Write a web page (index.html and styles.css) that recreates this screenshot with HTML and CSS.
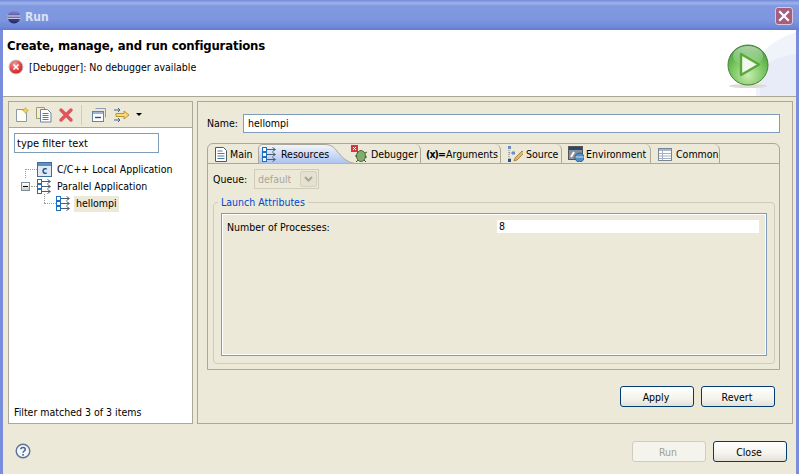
FILE: index.html
```html
<!DOCTYPE html>
<html lang="en">
<head>
<meta charset="utf-8">
<title>Run</title>
<link rel="stylesheet" href="styles.css">
</head>
<body>
<div class="window">
  <header class="titlebar">
    <svg class="ti" width="14" height="14" viewBox="0 0 14 14"><defs><linearGradient id="ec" x1="0" y1="0" x2="0" y2="1"><stop offset="0" stop-color="#8b8fd0"/><stop offset=".5" stop-color="#4a4a9a"/><stop offset="1" stop-color="#232266"/></linearGradient></defs><circle cx="7" cy="7" r="6.5" fill="url(#ec)"/><path d="M0.3 6h13.4M0.3 8.200h13.400" stroke="#eef0fa" stroke-width="1.100"/></svg>
    <span class="ttext">Run</span>
    <span class="xbtn"><svg width="18" height="18" viewBox="0 0 18 18"><path d="M5 5l8 8M13 5l-8 8" stroke="#fff" stroke-width="2.2" stroke-linecap="square"/></svg></span>
  </header>

  <section class="banner">
    <svg class="swoosh" width="40" height="66" viewBox="0 0 40 66"><path d="M0 30C12 14 24 8 40 2V66H0Z" fill="#f1f3fb"/><path d="M4 66V40C14 30 26 26 40 24V66Z" fill="#e8ecf8"/></svg>
    <div class="btext">
      <h1 class="btitle">Create, manage, and run configurations</h1>
      <div class="bmsg">
        <svg width="16" height="16" viewBox="0 0 16 16"><defs><radialGradient id="er" cx=".4" cy=".3" r=".8"><stop offset="0" stop-color="#f59a9a"/><stop offset=".6" stop-color="#e23b3b"/><stop offset="1" stop-color="#b81f1f"/></radialGradient></defs><circle cx="8" cy="8" r="7" fill="url(#er)" stroke="#c9c9c9"/><path d="M5.500 5.500l5 5M10.500 5.500l-5 5" stroke="#fff" stroke-width="1.600"/></svg>
        <span>[Debugger]: No debugger available</span>
      </div>
    </div>
    <svg class="runlogo" width="44" height="46" viewBox="0 0 44 46"><defs><radialGradient id="rg" cx=".5" cy=".75" r=".75"><stop offset="0" stop-color="#c8edb0"/><stop offset=".55" stop-color="#79c660"/><stop offset="1" stop-color="#3f9a3a"/></radialGradient><linearGradient id="rs" x1="0" y1="0" x2="0" y2="1"><stop offset="0" stop-color="#fff" stop-opacity=".55"/><stop offset="1" stop-color="#fff" stop-opacity="0"/></linearGradient></defs><ellipse cx="22" cy="42" rx="19" ry="2" fill="#dcdcd4"/><circle cx="22" cy="21" r="20" fill="url(#rg)" stroke="#4c7f3c" stroke-width="1"/><ellipse cx="22" cy="12" rx="15" ry="10" fill="url(#rs)"/><path d="M15 10L33 20.500 15 31Z" fill="#fff" fill-opacity=".85" stroke="#5aa83a" stroke-width="2.400" stroke-linejoin="round"/></svg>
  </section>

  <main class="content">
    <aside class="lpanel">
      <div class="ltool">
        <svg class="tic" width="16" height="16" viewBox="0 0 16 16"><path d="M2.500 2.500h7l3 3v9h-10z" fill="#fdfdf6" stroke="#8d99a8"/><path d="M11.500 0.500l1 2 2 1-2 1-1 2-1-2-2-1 2-1z" fill="#f4d35a" stroke="#c59a28" stroke-width=".6"/></svg>
        <svg class="tic" width="16" height="16" viewBox="0 0 16 16"><path d="M.5 .5h8v11h-8z" fill="#f5ecc9" stroke="#a59a6e"/><path d="M4.500 2.500h7l3.500 3.500v9H4.500z" fill="#fff" stroke="#6c83a8"/><path d="M6.500 6.500h6M6.500 8.500h6M6.500 10.500h6M6.500 12.500h6" stroke="#5a7bb0"/></svg>
        <svg class="tic" width="16" height="16" viewBox="0 0 16 16"><path d="M3 3l10 10M13 3L3 13" stroke="#e0555a" stroke-width="3.400" stroke-linecap="round"/></svg>
        <span class="tsep"></span>
        <svg class="tic" width="16" height="16" viewBox="0 0 16 16"><path d="M4.500 1.500h10v9" fill="none" stroke="#8d9fb8"/><rect x="1.500" y="4.500" width="11" height="10" fill="#fff" stroke="#6a80a0"/><rect x="2" y="5" width="10" height="2" fill="#9db4d4"/><path d="M4 10.500h6" stroke="#2f4f86" stroke-width="1.400"/></svg>
        <svg class="tic tic-wide" width="18" height="16" viewBox="0 0 18 16"><path d="M1 3h6M1 13h6" stroke="#45618c" stroke-width="1.200"/><path d="M5 1l2 2-2 2M5 11l2 2-2 2" fill="none" stroke="#45618c"/><path d="M3 6.500h8V4l5 4-5 4V9.500H3z" fill="#f6d97a" stroke="#b58a22" stroke-width=".9"/></svg>
        <span class="caret"></span>
      </div>
      <div class="ltree">
        <div class="filter">type filter text</div>
        <ul class="tree">
          <li class="row row-a">
            <span class="dotv dotv-a"></span><span class="doth doth-a"></span>
            <svg width="15" height="15" viewBox="0 0 15 15"><rect x=".5" y=".5" width="14" height="14" fill="#dfeaf6" stroke="#3e6d9e"/><rect x="1" y="1" width="13" height="3" fill="#5f8fbe"/><text x="4.500" y="12" class="cglyph">c</text></svg>
            <span class="lbl">C/C++ Local Application</span>
          </li>
          <li class="row row-b">
            <span class="minus"></span><span class="doth doth-b"></span>
            <svg width="15" height="15" viewBox="0 0 15 15"><use href="#par"/></svg>
            <span class="lbl">Parallel Application</span>
          </li>
          <li class="row row-c">
            <span class="dotv dotv-c"></span><span class="doth doth-c"></span>
            <svg width="15" height="15" viewBox="0 0 15 15"><use href="#par"/></svg>
            <span class="lbl sel">hellompi</span>
          </li>
        </ul>
        <div class="matched">Filter matched 3 of 3 items</div>
      </div>
    </aside>

    <section class="rpanel">
      <div class="namerow"><label class="nlabel">Name:</label><div class="ninput">hellompi</div></div>
      <div class="folder">
        <div class="tabs">
          <div class="tab tab-main">
            <svg width="14" height="15" viewBox="0 0 14 15"><path d="M1.500 .5h8l3 3v11h-11z" fill="#fff" stroke="#4d5a66"/><path d="M3.500 4h5M3.500 6.500h7M3.500 9h7M3.500 11.500h7" stroke="#4d7a9a"/></svg>
            <span>Main</span>
          </div>
          <div class="tab tab-res">
            <svg class="curve" width="100" height="20" viewBox="0 0 100 20"><defs><linearGradient id="ag" x1="0" y1="0" x2="0" y2="1"><stop offset="0" stop-color="#f4f6fc"/><stop offset="1" stop-color="#a9c1ee"/></linearGradient></defs><path d="M.5 20V5Q.5 .5 5 .5H68C80 .5 80 17 97 19.500V20Z" fill="url(#ag)" stroke="#aca899"/></svg>
            <svg class="tcon" width="15" height="15" viewBox="0 0 15 15"><use href="#par"/></svg>
            <span class="tcon">Resources</span>
          </div>
          <div class="tab tab-dbg">
            <svg width="17" height="18" viewBox="0 0 17 18"><ellipse cx="10" cy="11" rx="4.500" ry="5.500" fill="#82ab6e" stroke="#4d6b3a"/><path d="M5 6l2 2M16 7l-2 1M4 11h2M16 12h-2M5 17l2-2M15 17l-2-2" stroke="#3d4d2c"/><rect x="0" y="0" width="7" height="7" fill="#d9353a"/><path d="M2 2l3 3M5 2l-3 3" stroke="#fff"/></svg>
            <span>Debugger</span>
          </div>
          <div class="tab tab-arg"><span class="xeq">(x)=</span><span>Arguments</span></div>
          <div class="tab tab-src">
            <svg width="16" height="16" viewBox="0 0 16 16"><path d="M2 2v11h3M2 7h3" fill="none" stroke="#6b7f96" stroke-dasharray="1 1"/><rect x="1" y="0" width="3" height="3" fill="#6b8cc0"/><rect x="5" y="5.500" width="3" height="3" fill="#6b8cc0"/><rect x="1" y="13" width="3" height="3" fill="#35507c"/><path d="M7 15l1-3 7-7 2 2-7 7z" fill="#e8b860" stroke="#8a6a2a" stroke-width=".7"/></svg>
            <span>Source</span>
          </div>
          <div class="tab tab-env">
            <svg width="16" height="16" viewBox="0 0 16 16"><rect x=".5" y=".5" width="14" height="13" fill="#8a8f98" stroke="#555"/><rect x="1" y="1" width="13" height="3" fill="#24487a"/><path d="M3 11l3-5" stroke="#fff" stroke-width="2"/><circle cx="11.500" cy="11.500" r="4.500" fill="#4f8fc6" stroke="#2d5f92"/><path d="M7.500 11h8" stroke="#cfe2f2"/></svg>
            <span>Environment</span>
          </div>
          <div class="tab tab-com">
            <svg width="14" height="13" viewBox="0 0 14 13"><rect x=".5" y=".5" width="13" height="12" fill="#fff" stroke="#7a8594"/><rect x="1" y="1" width="12" height="2" fill="#a7b5cf"/><path d="M1 5.500h12M1 8h12M1 10.500h12M4.500 3v9" stroke="#a5b0c2"/></svg>
            <span>Common</span>
          </div>
        </div>
        <div class="tabbody">
          <div class="queue">
            <label class="qlabel">Queue:</label>
            <div class="combo"><span class="ctext">default</span><span class="carrow"><svg width="9" height="6" viewBox="0 0 9 6"><path d="M1 1l3.500 3.500L8 1" fill="none" stroke="#a9a698" stroke-width="2"/></svg></span></div>
          </div>
          <fieldset class="group">
            <legend>Launch Attributes</legend>
            <div class="attrs">
              <span class="alabel">Number of Processes:</span>
              <span class="avalue">8</span>
            </div>
          </fieldset>
        </div>
      </div>
      <div class="actions">
        <button class="btn" type="button">Apply</button>
        <button class="btn" type="button">Revert</button>
      </div>
    </section>
  </main>

  <footer class="foot">
    <svg class="help" width="16" height="16" viewBox="0 0 16 16"><circle cx="8" cy="8" r="6.800" fill="#f4f6fa" stroke="#5a7299" stroke-width="1.400"/><path d="M5.800 6.300C5.800 3.800 10.300 3.800 10.300 6.300C10.300 8 8 8 8 9.800" fill="none" stroke="#4a638e" stroke-width="1.500"/><rect x="7.200" y="11" width="1.600" height="1.700" fill="#4a638e"/></svg>
    <div class="factions">
      <button class="btn btn-off" type="button">Run</button>
      <button class="btn" type="button">Close</button>
    </div>
  </footer>
</div>
<svg class="defs" width="0" height="0"><defs><g id="par"><path d="M4 2.500h9M4 7.500h9M4 12.500h9M10.500 .5l3 2-3 2M10.500 5.500l3 2-3 2M10.500 10.500l3 2-3 2" fill="none" stroke="#4e5e70"/><rect x=".5" y=".5" width="4" height="4" fill="#fff" stroke="#1f6fbf"/><rect x=".5" y="5.500" width="4" height="4" fill="#fff" stroke="#1f6fbf"/><rect x=".5" y="10.500" width="4" height="4" fill="#fff" stroke="#1f6fbf"/></g></defs></svg>
</body>
</html>
```
FILE: styles.css
```css
* { box-sizing: border-box; }
html, body { margin: 0; padding: 0; width: 799px; height: 474px; overflow: hidden; }
body { font: 10.5px/13px "DejaVu Sans Condensed", "Liberation Sans", sans-serif; color: #000; background: #ece9d8; }
.defs { position: absolute; }
.window { width: 799px; height: 474px; display: flex; flex-direction: column; border-left: 3px solid #7a8cdc; border-right: 3px solid #7a8cdc; }

.titlebar { height: 30px; margin: 0 -3px; padding: 10px 6px 0 7px; display: flex; align-items: flex-start; gap: 4px;
  background: linear-gradient(#6f8ad8 0, #9fb2ea 3px, #8099e0 6px, #7d96df 20px, #6f88d8 27px, #5f7bd0 30px); }
.ttext { font: bold 12px/14px "DejaVu Sans Condensed", sans-serif; color: #d9e2f7; }
.xbtn { margin: -3px 0 0 auto; width: 18px; height: 18px; background: #a65e7e; border: 1px solid #d9c8dc; border-radius: 3px; display: flex; align-items: center; justify-content: center; }
.xbtn svg { margin: -1px; flex: none; }

.banner { height: 67px; background: #fff; border-bottom: 1px solid #a9a692; position: relative; display: flex; justify-content: space-between; padding: 0 26px 0 4px; }
.swoosh { position: absolute; right: 0; top: 0; }
.btitle { margin: 8px 0 0; font: bold 13px/15px "DejaVu Sans Condensed", sans-serif; letter-spacing: -.16px; }
.bmsg { display: flex; align-items: center; gap: 5px; margin: 6px 0 0 1px; }
.btext { position: relative; }
.runlogo { position: relative; margin-top: 14px; flex: none; }

.content { height: 323px; margin-top: 4px; padding: 0 0 0 5px; display: flex; gap: 4px; flex: none; }
.lpanel { width: 185px; border: 1px solid #aca899; display: flex; flex-direction: column; }
.ltool { height: 26px; border-bottom: 1px solid #aca899; display: flex; align-items: center; padding: 0 0 0 5px; }
.tic { flex: none; margin-right: 6px; }
.tsep { width: 1px; height: 20px; background: #cfccbb; margin: 0 9px 0 1px; }
.tic-wide { margin-right: 3px; }
.caret { width: 0; height: 0; border: 3px solid transparent; border-top: 3px solid #000; margin: 3px 0 0 2px; }
.ltree { flex: 1; background: #fff; padding: 5px 0 0 5px; display: flex; flex-direction: column; }
.filter { width: 145px; height: 20px; border: 1px solid #7f9db9; padding: 3px 2px; font-size: 11px; }
.tree { list-style: none; margin: 8px 0 0; padding: 0; flex: 1; }
.row { height: 17px; display: flex; align-items: center; position: relative; }
.row-a, .row-b { padding-left: 23px; }
.row-c { padding-left: 42px; }
.lbl { margin-left: 5px; white-space: nowrap; }
.sel { background: #ece9d8; padding: 1px 2px; margin-left: 3px; height: 16px; width: 45px; }
.cglyph { font: bold 10px "DejaVu Sans Mono", monospace; fill: #1e4f80; }
.dotv, .doth { position: absolute; }
.doth { height: 1px; border-top: 1px dotted #999; }
.dotv { width: 1px; border-left: 1px dotted #999; }
.doth-a { left: 11px; width: 12px; top: 8px; }
.dotv-a { left: 11px; top: 8px; height: 9px; }
.doth-b { left: 17px; width: 6px; top: 8px; }
.minus { position: absolute; left: 7px; top: 4px; width: 9px; height: 9px; border: 1px solid #7b8d9f; background: linear-gradient(#fff, #cfcdc0); }
.minus::after { content: ""; position: absolute; left: 1px; top: 3px; width: 5px; height: 1px; background: #000; }
.doth-c { left: 30px; width: 12px; top: 8px; }
.dotv-c { left: 30px; top: -1px; height: 9px; }
.matched { margin-bottom: 4px; white-space: nowrap; }

.rpanel { width: 596px; border: 1px solid #aca899; padding: 12px 12px 0 9px; display: flex; flex-direction: column; }
.namerow { display: flex; align-items: center; height: 19px; gap: 6px; }
.nlabel { white-space: nowrap; width: 30px; }
.ninput { flex: 1; height: 19px; background: #fff; border: 1px solid #7f9db9; padding: 2px 4px; }
.folder { margin-top: 10px; height: 227px; border: 1px solid #aca899; border-radius: 6px 6px 0 0; display: flex; flex-direction: column; }
.tabs { height: 20px; display: grid; grid-template-columns: 50px 89px 74px 80px 61px 89px 69px; border-bottom: 1px solid #aca899; flex: none; }
.tab { height: 19px; padding-top: 1px; display: flex; align-items: center; gap: 3px; white-space: nowrap; position: relative; padding-left: 6px; border-right: 1px solid #aca899; border-top-right-radius: 6px; }
.tab-main { border-right: 0; gap: 2px; }
.tab-res { border-right: 0; padding-left: 4px; gap: 4px; }
.curve { position: absolute; left: 0; top: 0; }
.tcon { position: relative; }
.tab-dbg { padding-left: 4px; gap: 3px; }
.tab-arg { padding-left: 5px; gap: 1px; }
.xeq { font-weight: bold; letter-spacing: -.9px; }
.tab-env { gap: 2px; }
.tab-com { padding-left: 7px; gap: 4px; }
.tabbody { flex: 1; padding: 5px 4px 5px 5px; display: flex; flex-direction: column; }
.queue { display: flex; align-items: center; gap: 5px; height: 20px; flex: none; }
.qlabel { width: 36px; }
.combo { display: flex; width: 65px; height: 20px; border: 1px solid #cfccbb; padding: 1px; }
.ctext { flex: 1; color: #a9a698; padding: 2px; }
.carrow { width: 17px; background: #e4e1d0; border: 1px solid #d4d1c0; border-radius: 2px; display: flex; align-items: center; justify-content: center; }
.group { flex: 1; margin: 7px 0 0; min-width: 0; border: 1px solid #cfccbb; border-radius: 4px; padding: 4px 7px 7px 7px; }
.group legend { padding: 0 3px; margin-left: -3px; color: #0046d5; line-height: 13px; }
.attrs { height: 143px; border: 1px solid #7f9db9; outline: 1px solid #fff; outline-offset: -2px; padding: 6px 7px 6px 5px; display: flex; align-items: flex-start; }
.alabel { width: 270px; padding-top: 1px; flex: none; }
.avalue { flex: 1; background: #fff; height: 13px; padding-left: 2px; line-height: 13px; }
.actions { display: flex; justify-content: flex-end; gap: 7px; margin-top: 16px; padding-right: 5px; }
.btn { width: 74px; height: 21px; padding: 1px 2px 0 0; font: inherit; color: #000; background: linear-gradient(#fff, #f4f3ee 60%, #e4e1d5); border: 1px solid #003c74; border-radius: 3px; }
.btn-off { color: #a1a192; background: #f4f3ec; border-color: #cfcdbf; }

.foot { flex: 1; display: flex; align-items: flex-start; justify-content: space-between; padding: 17px 9px 0 12px; }
.help { margin-top: 2px; }
.factions { display: flex; gap: 7px; }
```
